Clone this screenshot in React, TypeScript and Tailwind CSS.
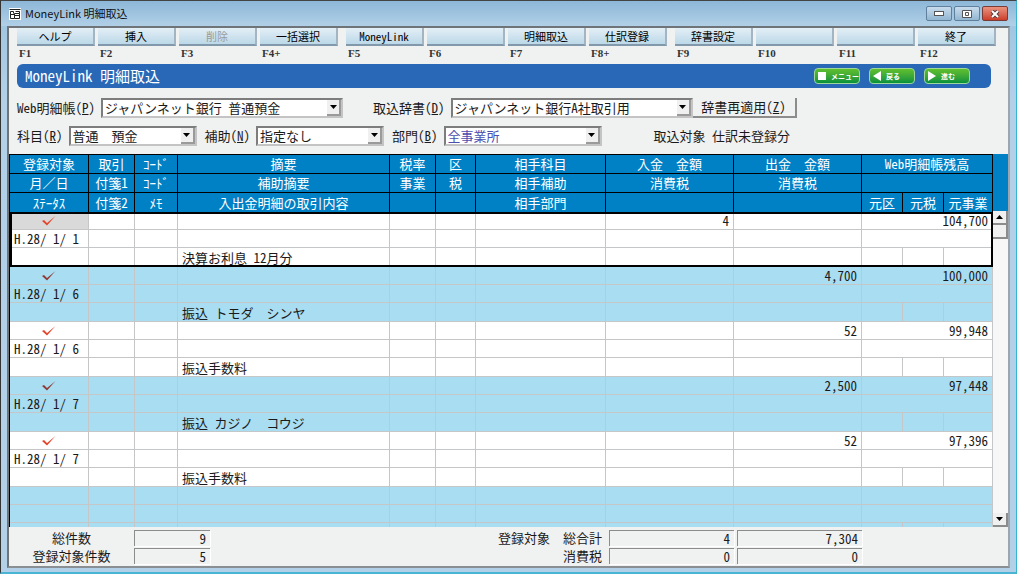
import { Fragment } from "react"
import clsx from "clsx"

const fkeys = [
  [
    { key: "F1", label: "ヘルプ" },
    { key: "F2", label: "挿入" },
    { key: "F3", label: "削除", disabled: true },
    { key: "F4+", label: "一括選択" },
  ],
  [
    { key: "F5", label: "MoneyLink" },
    { key: "F6", label: "" },
    { key: "F7", label: "明細取込" },
    { key: "F8+", label: "仕訳登録" },
  ],
  [
    { key: "F9", label: "辞書設定" },
    { key: "F10", label: "" },
    { key: "F11", label: "" },
    { key: "F12", label: "終了" },
  ],
]

const records = [
  { date: "H.28/ 1/ 1", memo: "決算お利息 12月分", deposit: "4", payment: "", balance: "104,700" },
  { date: "H.28/ 1/ 6", memo: "振込 トモダ　シンヤ", deposit: "", payment: "4,700", balance: "100,000" },
  { date: "H.28/ 1/ 6", memo: "振込手数料", deposit: "", payment: "52", balance: "99,948" },
  { date: "H.28/ 1/ 7", memo: "振込 カジノ　コウジ", deposit: "", payment: "2,500", balance: "97,448" },
  { date: "H.28/ 1/ 7", memo: "振込手数料", deposit: "", payment: "52", balance: "97,396" },
  { date: "", memo: "", deposit: "", payment: "", balance: "" },
]

// hwid narrows the full-width space and slash too, so switch it off for those
function Mixed({ text }: any) {
  return text.split(/([　／])/).map((part: string, i: number) =>
    i % 2 ? <span key={i} className="[font-feature-settings:normal]">{part}</span> : <Fragment key={i}>{part}</Fragment>
  )
}

function TitleBar() {
  return (
    <header className="flex h-[25px] shrink-0 items-center bg-linear-to-b from-[#8db7d8] to-[#b1d0e7] pr-2 pl-2">
      <svg width="12" height="12" viewBox="0 0 12 12" className="mr-1" fill="none" stroke="#222">
        <rect x="0" y="0" width="12" height="12" fill="#fff" stroke="none" />
        <path d="M0.500 1.500h11M1.500 3.500v7h4M1.500 3.500h3v2M1.500 6.500h4M5.500 5.500h5v5h-5zM5.500 7.500h5M6.500 3.500h4v2" />
      </svg>
      <h1 className="flex-1 text-[11px] text-[#111] [font-feature-settings:normal]">MoneyLink 明細取込</h1>
      <div className="flex gap-0.5">
        <button aria-label="最小化" className="flex h-[15px] w-[26px] items-center justify-center rounded-xs border border-[#5f7f9c] bg-linear-to-b from-[#c8dcec] to-[#93b6d2]">
          <svg width="10" height="5"><rect x="0.5" y="0.5" width="9" height="4" fill="#fff" stroke="#555" /></svg>
        </button>
        <button aria-label="最大化" className="flex h-[15px] w-[26px] items-center justify-center rounded-xs border border-[#5f7f9c] bg-linear-to-b from-[#c8dcec] to-[#93b6d2]">
          <svg width="10" height="8"><path d="M0.500 0.500h9v7h-9zM3.500 2.500h3v3h-3z" fill="#fff" stroke="#555" /></svg>
        </button>
        <button aria-label="閉じる" className="flex h-[15px] w-[26px] items-center justify-center rounded-xs border border-[#7c3a35] bg-linear-to-b from-[#e8927f] to-[#cc3d28]">
          <svg width="10" height="8">
            <path d="M2 1l6 6M8 1l-6 6" stroke="#5c3a3a" strokeWidth="4" />
            <path d="M2 1l6 6M8 1l-6 6" stroke="#fff" strokeWidth="2" />
          </svg>
        </button>
      </div>
    </header>
  )
}

function FunctionKeys() {
  return (
    <nav className="flex gap-2 pr-3 pl-2">
      {fkeys.map((group) => (
        <div key={group[0].key} className="grid flex-1 grid-cols-4 gap-[3px]">
          {group.map(({ key, label, disabled }) => (
            <div key={key}>
              <button
                disabled={disabled}
                aria-label={label || key}
                className="block h-[18px] w-full border-r-2 border-b-2 border-r-[#a3b5c3] border-b-[#8199ab] bg-linear-to-b from-[#e3eff6] to-[#bcd8e8] text-[11px] leading-4 text-black disabled:text-[#999]"
              >
                {label}
              </button>
              <div className="pt-px pl-0.5 font-['Liberation_Serif'] text-[11px] leading-3 font-bold text-[#333]">{key}</div>
            </div>
          ))}
        </div>
      ))}
    </nav>
  )
}

function GreenButton({ shape, label }: any) {
  return (
    <button className="flex h-4 w-[46px] items-center gap-1 rounded-sm border border-[#9fd79a] bg-linear-to-b from-[#5fc02c] to-[#00923c] pl-[3px] text-[7px] font-bold text-white">
      <svg width="9" height="10" viewBox="0 0 9 10" fill="#fff" className="shrink-0">
        <path d={shape} />
      </svg>
      <span className="whitespace-nowrap">{label}</span>
    </button>
  )
}

function Select({ id, label, hotkey, value, width, className }: any) {
  return (
    <div className="flex items-center gap-1.5">
      <label htmlFor={id} className="whitespace-pre">
        {label}(<u>{hotkey}</u>)
      </label>
      <div className={clsx("relative", width)}>
        <select id={id} className={clsx("block h-5 w-full appearance-none border-2 border-t-[#7d7d7d] border-r-[#c4c4c4] border-b-[#c4c4c4] border-l-[#7d7d7d] bg-white pl-0.5 leading-4", className)}>
          <option>{value}</option>
        </select>
        <span className="pointer-events-none absolute top-0.5 right-0.5 flex h-4 w-3.5 items-center justify-center border-r-2 border-b-2 border-[#9a9a9a] bg-[#f0f0f0]">
          <svg width="7" height="4"><path d="M0 0h7L3.500 4z" /></svg>
        </span>
      </div>
    </div>
  )
}

function Th({ children, colSpan, last }: any) {
  return (
    <th colSpan={colSpan} className={clsx("h-[19px] border-r border-black p-0 text-center font-normal leading-[18px] whitespace-nowrap", last ? "border-b-0" : "border-b")}>
      {children && <Mixed text={children} />}
    </th>
  )
}

function Td({ children, colSpan, className }: any) {
  return (
    <td colSpan={colSpan} className={clsx("h-full border-r border-b border-[#c5c6c8] px-1 py-0 leading-[17px] whitespace-pre", className)}>
      {children}
    </td>
  )
}

function Blanks({ count }: any) {
  return Array.from({ length: count }, (_, i) => <Td key={i} />)
}

function Record({ info, striped, selected }: any) {
  const { date, memo, deposit, payment, balance } = info
  return (
    <tbody className={clsx(striped ? "bg-[#a9ddf2]" : "bg-white", selected && "outline-2 -outline-offset-2 outline-black")}>
      <tr className="h-[18px]">
        <Td className={clsx(selected && "bg-[#d9d9d9]")}>
          {date && (
            <svg width="14" height="10" viewBox="0 0 14 10" className="mx-auto" role="img" aria-label="登録対象">
              <path d="M0 5l2-1 3 3 8.500-7L5 9.500z" fill={striped ? "#8f3a35" : "#e2452c"} />
            </svg>
          )}
        </Td>
        <Blanks count={6} />
        <Td className="text-right">{deposit}</Td>
        <Td className="text-right">{payment}</Td>
        <Td colSpan={3} className="text-right">{balance}</Td>
      </tr>
      <tr className="h-[18px]">
        <Td>{date}</Td>
        <Blanks count={8} />
        <Td colSpan={3} />
      </tr>
      <tr className="h-[19px]">
        <Blanks count={3} />
        <Td><Mixed text={memo} /></Td>
        <Blanks count={8} />
      </tr>
    </tbody>
  )
}

function DetailTable() {
  return (
    <table className="w-full table-fixed border-separate border-spacing-0">
      <colgroup>
        <col className="w-[79px]" />
        <col className="w-[46px]" />
        <col className="w-[43px]" />
        <col />
        <col className="w-[46px]" />
        <col className="w-[40px]" />
        <col className="w-[130px]" />
        <col className="w-[128px]" />
        <col className="w-[128px]" />
        <col className="w-[41px]" />
        <col className="w-[41px]" />
        <col className="w-[49px]" />
      </colgroup>
      <thead className="bg-[#0081c6] text-white">
        <tr>
          <Th>登録対象</Th>
          <Th>取引</Th>
          <Th>ｺｰﾄﾞ</Th>
          <Th>摘要</Th>
          <Th>税率</Th>
          <Th>区</Th>
          <Th>相手科目</Th>
          <Th>入金　金額</Th>
          <Th>出金　金額</Th>
          <Th colSpan={3}>Web明細帳残高</Th>
        </tr>
        <tr>
          <Th>月／日</Th>
          <Th>付箋1</Th>
          <Th>ｺｰﾄﾞ</Th>
          <Th>補助摘要</Th>
          <Th>事業</Th>
          <Th>税</Th>
          <Th>相手補助</Th>
          <Th>消費税</Th>
          <Th>消費税</Th>
          <Th colSpan={3} />
        </tr>
        <tr>
          <Th last>ｽﾃｰﾀｽ</Th>
          <Th last>付箋2</Th>
          <Th last>ﾒﾓ</Th>
          <Th last>入出金明細の取引内容</Th>
          <Th last />
          <Th last />
          <Th last>相手部門</Th>
          <Th last />
          <Th last />
          <Th last>元区</Th>
          <Th last>元税</Th>
          <Th last>元事業</Th>
        </tr>
      </thead>
      {records.map((info, i) => (
        <Record key={i} info={info} striped={i % 2 === 1} selected={i === 0} />
      ))}
    </table>
  )
}

function ScrollBar() {
  return (
    <div className="flex w-[15px] shrink-0 flex-col bg-[#f7f7f7]">
      <div className="h-[57px] shrink-0 bg-[#0081c6]" />
      <button aria-label="上へ" className="flex h-3.5 shrink-0 items-center justify-center border-r-2 border-b-2 border-[#8c8c8c] bg-[#f0f0f0]">
        <svg width="7" height="4"><path d="M0 4h7L3.500 0z" /></svg>
      </button>
      <div className="h-3.5 shrink-0 border-r-2 border-b-2 border-[#8c8c8c] bg-[#f0f0f0]" />
      <div className="flex-1" />
      <button aria-label="下へ" className="flex h-3.5 shrink-0 items-center justify-center border-r-2 border-b-2 border-[#8c8c8c] bg-[#f0f0f0]">
        <svg width="7" height="4"><path d="M0 0h7L3.500 4z" /></svg>
      </button>
    </div>
  )
}

function Total({ children, className }: any) {
  return (
    <output className={clsx("h-4 border-t border-l border-[#8c8c8c] pr-1 text-right leading-4 shadow-[1px_1px_0_#fff]", className)}>
      {children}
    </output>
  )
}

function Totals() {
  return (
    <footer className="flex h-[39px] shrink-0 items-center">
      <div className="grid grid-cols-[125px_76px] gap-y-0.5 leading-4">
        <span className="text-center">総件数</span>
        <Total>9</Total>
        <span className="text-center">登録対象件数</span>
        <Total>5</Total>
      </div>
      <div className="ml-auto grid grid-cols-[112px_125px_125px] gap-x-[3px] gap-y-0.5 pr-[146px] leading-4">
        <span className="pr-1 text-right"><Mixed text="登録対象　総合計" /></span>
        <Total>4</Total>
        <Total>7,304</Total>
        <span className="pr-1 text-right">消費税</span>
        <Total>0</Total>
        <Total>0</Total>
      </div>
    </footer>
  )
}

export default function App() {
  return (
    <div className="flex h-screen flex-col border-t border-r border-b-2 border-l border-t-[#444] border-r-[#35b5cf] border-b-[#49b4d3] border-l-[#333] bg-linear-to-b from-[#9cc3df] to-[#b3d0e9] to-[100px] font-['Noto_Sans_CJK_JP',sans-serif] text-[13px] text-[#1a1a1a] [font-feature-settings:'hwid']">
      <TitleBar />
      <main className="mx-1.5 mb-1 flex min-h-0 flex-1 flex-col border-2 border-t-[#6f7478] border-r-[#9da6ac] border-b-[#8a8f93] border-l-[#6f7478] bg-[#f0f1f1]">
        <FunctionKeys />
        <div className="mt-[5px] mr-[17px] ml-2 flex h-6 shrink-0 items-center rounded-md bg-[#2868b7] pr-[21px] pl-2">
          <h2 className="flex-1 text-[15px] text-white">MoneyLink 明細取込</h2>
          <div className="flex gap-[9px]">
            <GreenButton shape="M0 1h8v8H0z" label="メニュー" />
            <GreenButton shape="M8 0v10L0 5z" label="戻る" />
            <GreenButton shape="M0 0v10l8-5z" label="進む" />
          </div>
        </div>
        <form className="flex flex-col gap-2 px-2 pt-2.5 pb-2">
          <div className="flex items-center">
            <Select id="book" label="Web明細帳" hotkey="P" value="ジャパンネット銀行 普通預金" width="w-[242px]" />
            <div className="w-[30px]" />
            <Select id="dict" label="取込辞書" hotkey="D" value="ジャパンネット銀行A社取引用" width="w-[242px]" />
            <button type="button" className="h-5 w-[104px] border-r-2 border-b-2 border-[#8c8c8c] leading-4 whitespace-nowrap">
              辞書再適用(<u>Z</u>)
            </button>
          </div>
          <div className="flex items-center">
            <Select id="account" label="科目" hotkey="R" value="普通　預金" width="w-[128px]" className="[font-feature-settings:normal]" />
            <div className="w-2" />
            <Select id="sub" label="補助" hotkey="N" value="指定なし" width="w-[128px]" />
            <div className="w-2" />
            <Select id="dept" label="部門" hotkey="B" value="全事業所" width="w-[158px]" className="text-[#4a4fb0]" />
            <p className="ml-[52px]">取込対象 仕訳未登録分</p>
          </div>
        </form>
        <section className="flex min-h-0 flex-1">
          <div className="min-w-0 flex-1 overflow-hidden border-t border-l border-black">
            <DetailTable />
          </div>
          <ScrollBar />
        </section>
        <Totals />
      </main>
    </div>
  )
}
